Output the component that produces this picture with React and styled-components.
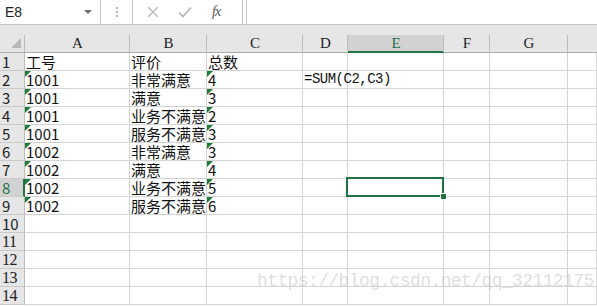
import React from 'react';
import styled, { createGlobalStyle, css } from 'styled-components';

const GlobalStyle = createGlobalStyle`
  html, body {
    margin: 0;
    padding: 0;
    background: #ffffff;
  }
  body {
    font-family: "Noto Sans CJK SC", "Noto Sans", sans-serif;
  }
`;

const GREEN = '#217346';
const HEADER_BG = '#e6e6e6';
const HEADER_SEL = '#d2d2d2';
const GRID = '#d4d4d4';
const HEAD_LINE = '#bcbcbc';

const Page = styled.div`
  position: relative;
  width: 597px;
  height: 306px;
  overflow: hidden;
  background: #fff;
`;

const FormulaBar = styled.div`
  display: flex;
  height: 25px;
  box-sizing: border-box;
  border-bottom: 1px solid #c6c6c6;
  background: #fff;
`;

const NameBox = styled.div`
  width: 101px;
  box-sizing: border-box;
  border-right: 1px solid #c6c6c6;
  display: flex;
  align-items: center;
  justify-content: space-between;
  padding: 0 8px 0 5px;
  font-family: "Liberation Sans", Arial, sans-serif;
  font-size: 14px;
  color: #222;
`;

const Caret = styled.span`
  width: 0;
  height: 0;
  border-left: 4px solid transparent;
  border-right: 4px solid transparent;
  border-top: 4px solid #6e6e6e;
`;

const Grip = styled.div`
  width: 31px;
  display: flex;
  flex-direction: column;
  align-items: center;
  justify-content: center;
  gap: 2px;

  span {
    width: 2px;
    height: 2px;
    background: #b4b4b4;
  }
`;

const ActionBox = styled.div`
  width: 111px;
  box-sizing: border-box;
  border-left: 1px solid #c6c6c6;
  border-right: 1px solid #c6c6c6;
  display: flex;
  align-items: center;
  padding-left: 14px;
  gap: 19px;
`;

const Fx = styled.span`
  font-family: "Liberation Serif", serif;
  font-style: italic;
  font-size: 14px;
  color: #555;
  letter-spacing: -1px;
  margin-left: 1px;
`;

const FormulaInput = styled.div`
  flex: 1;
  margin-left: 3px;
  border-left: 1px solid #c6c6c6;
`;

const Band = styled.div`
  height: 10px;
  background: ${HEADER_BG};
`;

const Sheet = styled.div`
  display: grid;
  grid-template-columns: 25px 105px 77px 96px 45px 96px 46px 78px 1fr;
  grid-auto-rows: 18px;
`;

const Corner = styled.div`
  background: ${HEADER_BG};
  border-bottom: 1px solid #ababab;
  box-sizing: border-box;
  display: flex;
  align-items: flex-end;
  justify-content: flex-end;
  padding: 0 4px 4px 0;

  &::before {
    content: '';
    width: 0;
    height: 0;
    border-left: 10px solid transparent;
    border-bottom: 10px solid #b8b8b8;
  }
`;

const ColHeader = styled.div`
  position: relative;
  background: ${(p) => (p.$selected ? HEADER_SEL : HEADER_BG)};
  box-sizing: border-box;
  border-bottom: ${(p) => (p.$selected ? `2px solid ${GREEN}` : '1px solid #ababab')};
  display: flex;
  align-items: center;
  justify-content: center;
  font-family: "Liberation Serif", "DejaVu Serif", serif;
  font-size: 15px;
  line-height: 16px;
  color: ${(p) => (p.$selected ? GREEN : '#222')};
  padding-bottom: 1px;

  &::before {
    content: '';
    position: absolute;
    left: -1px;
    top: 0;
    bottom: 0;
    width: 1px;
    background: ${HEAD_LINE};
  }
`;

const RowHeader = styled.div`
  background: ${(p) => (p.$selected ? HEADER_SEL : HEADER_BG)};
  box-sizing: border-box;
  border-bottom: 1px solid #cacaca;
  border-right: ${(p) => (p.$selected ? `2px solid ${GREEN}` : `1px solid ${HEAD_LINE}`)};
  display: flex;
  align-items: flex-end;
  padding-left: 2px;
  font-size: 15px;
  line-height: 17px;
  color: ${(p) => (p.$selected ? GREEN : '#222')};
  ${(p) =>
    p.$serif &&
    css`
      font-family: "Liberation Serif", serif;
      font-size: 16px;
      letter-spacing: -0.5px;
    `}
`;

const Cell = styled.div`
  position: relative;
  box-sizing: border-box;
  border-right: 1px solid ${GRID};
  border-bottom: 1px solid ${GRID};
  display: flex;
  align-items: flex-end;
  padding-left: 1px;
  font-size: 15px;
  line-height: 17px;
  color: #111;
  white-space: nowrap;
  overflow: visible;

  ${(p) =>
    p.$flag &&
    css`
      &::before {
        content: '';
        position: absolute;
        top: 0;
        left: 0;
        width: 0;
        height: 0;
        border-top: 6px solid #1e7b38;
        border-right: 6px solid transparent;
      }
    `}

  ${(p) =>
    p.$active &&
    css`
      &::after {
        content: '';
        position: absolute;
        top: -2px;
        left: -2px;
        right: -1px;
        bottom: -1px;
        border: 2px solid ${GREEN};
        z-index: 2;
      }
    `}
`;

const Handle = styled.span`
  position: absolute;
  right: -4px;
  bottom: -4px;
  width: 5px;
  height: 5px;
  background: ${GREEN};
  border: 1px solid #fff;
  z-index: 3;
`;

const Formula = styled.span`
  font-family: "Liberation Mono", monospace;
  font-size: 14px;
  letter-spacing: -0.5px;
  position: relative;
  z-index: 1;
`;

const Watermark = styled.div`
  position: absolute;
  left: 257px;
  top: 271px;
  font-family: "Liberation Mono", monospace;
  font-size: 18px;
  letter-spacing: -0.6px;
  color: rgba(190, 190, 190, 0.5);
  pointer-events: none;
`;

const COLS = ['A', 'B', 'C', 'D', 'E', 'F', 'G', ''];

const DATA = [
  ['工号', '评价', '总数'],
  ['1001', '非常满意', '4'],
  ['1001', '满意', '3'],
  ['1001', '业务不满意', '2'],
  ['1001', '服务不满意', '3'],
  ['1002', '非常满意', '3'],
  ['1002', '满意', '4'],
  ['1002', '业务不满意', '5'],
  ['1002', '服务不满意', '6'],
];

const ACTIVE = { row: 8, col: 4 };

const CrossIcon = () => (
  <svg width="12" height="12" viewBox="0 0 12 12">
    <path d="M1 1L11 11M11 1L1 11" stroke="#b5b5b5" strokeWidth="1.3" fill="none" />
  </svg>
);

const CheckIcon = () => (
  <svg width="14" height="12" viewBox="0 0 14 12">
    <path d="M1 6.5L5 10.5L13 1.5" stroke="#b5b5b5" strokeWidth="1.6" fill="none" />
  </svg>
);

export default function App() {
  const rows = Array.from({ length: 14 }, (_, i) => i + 1);

  return (
    <Page>
      <GlobalStyle />
      <FormulaBar>
        <NameBox>
          E8
          <Caret />
        </NameBox>
        <Grip>
          <span />
          <span />
          <span />
        </Grip>
        <ActionBox>
          <CrossIcon />
          <CheckIcon />
          <Fx>fx</Fx>
        </ActionBox>
        <FormulaInput />
      </FormulaBar>
      <Band />
      <Sheet>
        <Corner />
        {COLS.map((c, i) => (
          <ColHeader key={i} $selected={i === ACTIVE.col}>
            {c}
          </ColHeader>
        ))}
        {rows.map((r) => {
          const data = DATA[r - 1] || [];
          return (
            <React.Fragment key={r}>
              <RowHeader $selected={r === ACTIVE.row} $serif={r > 10}>
                {r}
              </RowHeader>
              {COLS.map((_, c) => {
                const value = data[c];
                const active = r === ACTIVE.row && c === ACTIVE.col;
                const flag = r > 1 && r <= 9 && (c === 0 || c === 2);
                return (
                  <Cell key={c} $flag={flag} $active={active}>
                    {value}
                    {r === 2 && c === 3 && <Formula>=SUM(C2,C3)</Formula>}
                    {active && <Handle />}
                  </Cell>
                );
              })}
            </React.Fragment>
          );
        })}
      </Sheet>
      <Watermark>https://blog.csdn.net/qq_32112175</Watermark>
    </Page>
  );
}
